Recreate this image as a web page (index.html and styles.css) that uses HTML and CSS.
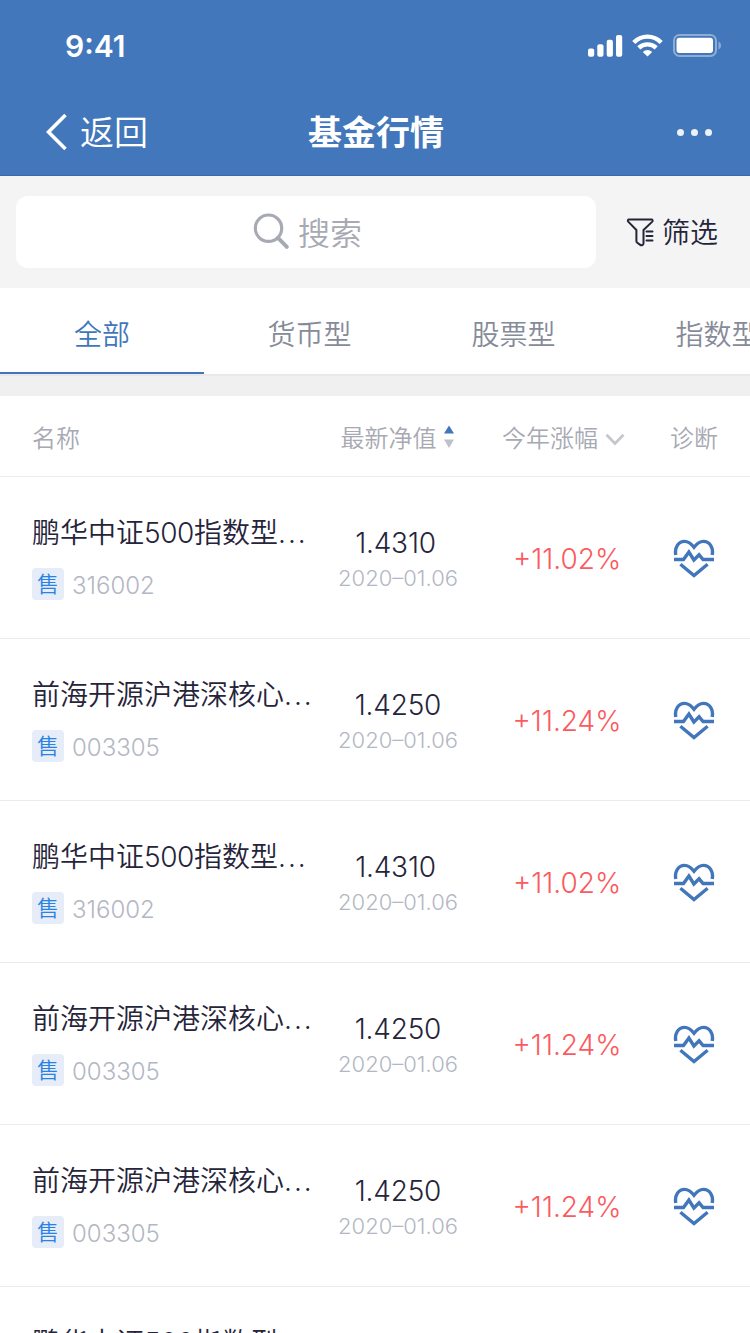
FILE: index.html
```html
<!DOCTYPE html>
<html lang="zh-CN">
	<head>
		<meta charset="UTF-8">
		<title>基金行情</title>
		<link rel="stylesheet" href="styles.css">
	</head>
	<body>
		<!-- 诊断图标 -->
		<svg class="defs" width="0" height="0">
			<symbol id="heart" viewBox="0 0 42 40">
				<path d="M2.800 16C1.300 8.500 5.500 2.400 11.500 2.400c4.200 0 7 2.600 9.500 5.900 2.500-3.300 5.300-5.900 9.500-5.900 6 0 10.200 6.100 8.700 13.600M1 20.500h9.500L15.900 13l5 8 5.200-5.200 4 4.700H41M7.400 25.300 21 36.500l13.600-11.200" fill="none" stroke="#4276bb" stroke-width="3.400"/>
			</symbol>
		</svg>

		<div class="page">
			<header class="header">
				<div class="status">
					<span class="time">9:41</span>
					<svg class="status-icons" width="134" height="24" viewBox="0 0 134 24" fill="#fff">
						<rect x="0" y="15.500" width="6.200" height="8.300" rx="2"/>
						<rect x="9.300" y="11.300" width="6.200" height="12.500" rx="2"/>
						<rect x="18.700" y="6.800" width="6.200" height="17" rx="2"/>
						<rect x="28" y="2" width="6.200" height="21.800" rx="2"/>
						<path d="M45.800 9.500a19 19 0 0 1 27.400 0M50.800 14.900a12.400 12.400 0 0 1 17.400 0" fill="none" stroke="#fff" stroke-width="4.400"/>
						<path d="M54.800 18.900a6.800 6.800 0 0 1 9.400 0L59.500 23.600z"/>
						<rect x="86" y="2" width="42" height="21" rx="5.500" fill="none" stroke="#fff" stroke-opacity=".4" stroke-width="2"/>
						<rect x="88.500" y="4.800" width="36.500" height="15.200" rx="3"/>
						<path d="M130.500 8.500c3.300 1.200 3.300 6.800 0 8z" fill-opacity=".4"/>
					</svg>
				</div>
				<div class="nav">
					<a class="back" href="javascript:">
						<svg width="22" height="38" viewBox="0 0 22 38"><path d="M19.500 2 2.500 19l17 17" fill="none" stroke="#fff" stroke-width="3.600"/></svg>
						<span>返回</span>
					</a>
					<h1 class="title">基金行情</h1>
					<a class="more" href="javascript:"><i></i><i></i><i></i></a>
				</div>
			</header>

			<div class="search">
				<div class="search-box">
					<svg width="38" height="38" viewBox="0 0 38 38" fill="none" stroke="#a7a9b3" stroke-width="3.200"><circle cx="16.500" cy="15.200" r="13.200"/><path d="m26 24.800 8.800 9" stroke-width="4" stroke-linecap="round"/></svg>
					<span>搜索</span>
				</div>
				<a class="filter" href="javascript:">
					<svg width="28" height="29" viewBox="0 0 28 29" fill="none" stroke="#25243a" stroke-width="2" stroke-linejoin="round" stroke-linecap="round"><path d="M3 1.500h22.500c1.200 0 1.500 1.400.8 2.100L17.500 12v13.200c0 2.600-2.300 2.400-3.600 1.400l-2.600-1.900c-.7-.5-.9-1-.9-1.800V12L2.200 3.600C1.500 2.800 1.800 1.500 3 1.500zM20.500 13.500h6M20.500 18h6M20.500 22.500h6"/></svg>
					<span>筛选</span>
				</a>
			</div>

			<nav class="tabs">
				<a class="tab active" href="javascript:">全部</a>
				<a class="tab" href="javascript:">货币型</a>
				<a class="tab" href="javascript:">股票型</a>
				<a class="tab" href="javascript:">指数型</a>
			</nav>

			<div class="list">
				<div class="row list-head">
					<div class="name">名称</div>
					<div class="value">
						最新净值
						<svg width="10" height="23" viewBox="0 0 10 23"><path d="M5 .5l5 8H0z" fill="#4276bb"/><path d="M5 23l5-8.500H0z" fill="#bfc0ca"/></svg>
					</div>
					<div class="rate">
						今年涨幅
						<svg width="20" height="13" viewBox="0 0 20 13"><path d="m1.500 1.800 8.500 8.700 8.500-8.700" fill="none" stroke="#c6c7cb" stroke-width="2.800"/></svg>
					</div>
					<div class="diag">诊断</div>
				</div>

				<div class="row item">
					<div class="name">
						<p class="fund">鹏华中证<b>500</b>指数型<em>...</em></p>
						<p class="code"><span class="tag">售</span><span class="no">316002</span></p>
					</div>
					<div class="value"><p class="num">1.4310</p><p class="date">2020–01.06</p></div>
					<div class="rate">+11.02%</div>
					<div class="diag"><svg width="42" height="40"><use href="#heart"/></svg></div>
				</div>
				<div class="row item">
					<div class="name">
						<p class="fund">前海开源沪港深核心<em>...</em></p>
						<p class="code"><span class="tag">售</span><span class="no">003305</span></p>
					</div>
					<div class="value"><p class="num wide">1.4250</p><p class="date">2020–01.06</p></div>
					<div class="rate">+11.24%</div>
					<div class="diag"><svg width="42" height="40"><use href="#heart"/></svg></div>
				</div>
				<div class="row item">
					<div class="name">
						<p class="fund">鹏华中证<b>500</b>指数型<em>...</em></p>
						<p class="code"><span class="tag">售</span><span class="no">316002</span></p>
					</div>
					<div class="value"><p class="num">1.4310</p><p class="date">2020–01.06</p></div>
					<div class="rate">+11.02%</div>
					<div class="diag"><svg width="42" height="40"><use href="#heart"/></svg></div>
				</div>
				<div class="row item">
					<div class="name">
						<p class="fund">前海开源沪港深核心<em>...</em></p>
						<p class="code"><span class="tag">售</span><span class="no">003305</span></p>
					</div>
					<div class="value"><p class="num wide">1.4250</p><p class="date">2020–01.06</p></div>
					<div class="rate">+11.24%</div>
					<div class="diag"><svg width="42" height="40"><use href="#heart"/></svg></div>
				</div>
				<div class="row item">
					<div class="name">
						<p class="fund">前海开源沪港深核心<em>...</em></p>
						<p class="code"><span class="tag">售</span><span class="no">003305</span></p>
					</div>
					<div class="value"><p class="num wide">1.4250</p><p class="date">2020–01.06</p></div>
					<div class="rate">+11.24%</div>
					<div class="diag"><svg width="42" height="40"><use href="#heart"/></svg></div>
				</div>
				<div class="row item">
					<div class="name">
						<p class="fund">鹏华中证<b>500</b>指数型<em>...</em></p>
					</div>
				</div>
			</div>
		</div>
	</body>
</html>
```
FILE: styles.css
```css
*{ box-sizing: border-box; margin: 0; padding: 0;}
body{ background: #fff; font-family: Inter,"Noto Sans CJK SC",sans-serif; font-weight: 350; color: #25243a;}
a{ color: inherit; text-decoration: none;}
b,em{ font-weight: inherit; font-style: normal;}
svg{ display: block; flex: none;}
.defs{ position: absolute;}
.page{ width: 750px; height: 1333px; overflow: hidden;}

/*头部*/
.header{ height: 176px; background: #4377bb; border-bottom: 1px solid #3a69ab; color: #fff;}
.status{ height: 88px; padding: 2px 28px 0 65px; display: flex; align-items: center; justify-content: space-between;}
.time{ font-size: 30px; font-weight: 600; line-height: 40px; padding-top: 2px;}
.nav{ height: 88px; padding: 0 38px 0 46px; display: grid; grid-template-columns: 1fr auto 1fr; align-items: center;}
.back{ display: flex; align-items: center; gap: 12px; font-size: 34px; line-height: 48px;}
.back span{ padding-top: 2px;}
.title{ margin: 2px 3px 0 -3px; font-size: 34px; font-weight: 600; line-height: 48px;}
.more{ display: flex; gap: 7px; justify-content: flex-end;}
.more i{ width: 7px; height: 7px; border-radius: 50%; background: #edf1f8;}

/*搜索*/
.search{ height: 112px; padding: 20px 32px 20px 16px; background: #f4f4f4; display: flex; align-items: center; justify-content: space-between;}
.search-box{ width: 580px; height: 72px; padding: 0 0 2px 2px; border-radius: 12px; background: #fff; display: flex; align-items: center; justify-content: center; gap: 8px; font-size: 32px; color: #a7a9b3;}
.search-box svg{ margin-top: 2px;}
.filter{ display: flex; align-items: center; gap: 8px; font-size: 28px;}
.filter span{ margin-top: -2px;}

/*分类*/
.tabs{ height: 108px; border-bottom: 20px solid #f0f0f0; display: flex; box-shadow: inset 0 -2px #e9e9eb; overflow: hidden;}
.tab{ flex: 0 0 204px; height: 86px; line-height: 95px; text-align: center; font-size: 28px; color: #858b99;}
.tab.active{ color: #4276bb; border-bottom: 2px solid #4276bb;}
.tab + .tab{ padding-left: 7px;}

/*列表*/
.row{ display: grid; grid-template-columns: 300px 132px 206px 48px; padding-left: 32px; align-items: center; border-bottom: 1px solid #ebebed;}
.list-head{ height: 81px; font-size: 24px; color: #a7a9b3;}
.list-head .value,.list-head .rate{ display: flex; align-items: center; justify-content: center; gap: 7px;}
.list-head .value{ padding-right: 2px;}
.list-head .rate{ padding-right: 7px;}
.list-head .rate svg{ margin-top: 6px;}
.item{ height: 162px; align-items: start;}
.item .name{ padding-top: 36px;}
.fund{ font-size: 28px; line-height: 40px; white-space: nowrap;}
.fund b{ letter-spacing: -.4px;}
.fund em{ letter-spacing: 2px;}
.code{ display: flex; align-items: center; gap: 8px; margin-top: 15px; height: 32px; font-size: 24px; line-height: 32px; color: #b3b7c3;}
.code .no{ padding-top: 3px;}
.tag{ width: 32px; height: 32px; border-radius: 4px; background: #e6edf8; color: #2a82e4; font-size: 22px; text-align: center;}
.value,.rate{ text-align: center; white-space: nowrap;}
.item .value{ padding-top: 48px;}
.num{ padding-right: 5px; font-size: 28px; line-height: 36px; letter-spacing: -.2px;}
.num.wide{ padding-right: 0;}
.date{ font-size: 22px; line-height: 35px; color: #b3b7c3;}
.item .rate{ padding-top: 62px; font-size: 28px; line-height: 40px; color: #fb5a60;}
.diag{ text-align: center;}
.item .diag{ padding-top: 62px;}
.diag svg{ margin: 0 auto;}
```
